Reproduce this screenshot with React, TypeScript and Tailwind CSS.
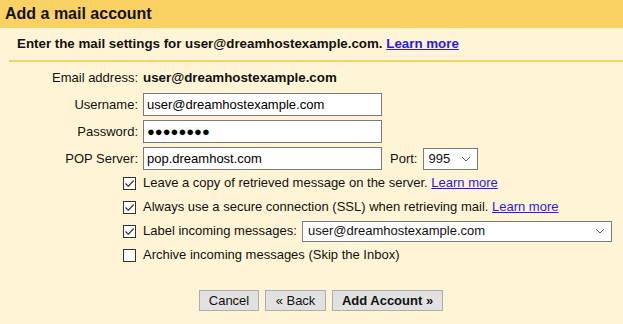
import React from 'react';

const Check = ({ checked }: { checked: boolean }) => (
  <span className="w-[13px] h-[13px] border border-[#333] bg-white flex items-center justify-center shrink-0">
    {checked && (
      <svg width="11" height="11" viewBox="0 0 11 11" fill="none">
        <path d="M1.5 5.5l2.8 2.8L9.8 2.5" stroke="#444" strokeWidth="1.3" />
      </svg>
    )}
  </span>
);

const Chevron = () => (
  <svg width="10" height="6" viewBox="0 0 10 6" fill="none">
    <path d="M1 1l4 4 4-4" stroke="#555" strokeWidth="1" />
  </svg>
);

const Link = ({ children }: { children: React.ReactNode }) => (
  <a href="#" className="text-[#2a17ee] underline">{children}</a>
);

const App = () => {
  const labelCls = 'text-right pr-[5px] text-[13px]';
  const inputCls = 'w-[239px] h-[23px] border border-[#7a7a7a] bg-white px-[3px] text-[13px] text-black outline-none';

  return (
    <div className="w-[623px] h-[324px] bg-[#fff5d6] text-[#111] font-['Liberation_Sans',Arial,sans-serif]">
      <div className="h-[28px] bg-[#fad163] flex items-center px-[5px]">
        <h1 className="text-[16px] font-bold">Add a mail account</h1>
      </div>

      <div className="h-[32px] flex items-center pl-[17px] text-[13.33px] font-bold">
        <span>
          Enter the mail settings for user@dreamhostexample.com. <Link>Learn more</Link>
        </span>
      </div>
      <div className="ml-[9px] h-[2px] bg-[#fad163]" />

      {/* account fields */}
      <div className="grid grid-cols-[143px_1fr] gap-y-[4px] items-center mt-[4px]">
        <div className={labelCls}>Email address:</div>
        <div className="h-[23px] flex items-center text-[13.33px] font-bold">user@dreamhostexample.com</div>

        <div className={labelCls}>Username:</div>
        <input className={inputCls} defaultValue="user@dreamhostexample.com" readOnly />

        <div className={labelCls}>Password:</div>
        <input className={inputCls} defaultValue="●●●●●●●●" readOnly />

        <div className={labelCls}>POP Server:</div>
        <div className="flex items-center">
          <input className={inputCls} defaultValue="pop.dreamhost.com" readOnly />
          <span className="ml-[8px] text-[13px]">Port:</span>
          <div className="ml-[6px] w-[55px] h-[22px] border border-[#7a7a7a] bg-white flex items-center justify-between pl-[4px] pr-[6px] text-[13px]">
            <span>995</span>
            <Chevron />
          </div>
        </div>
      </div>

      {/* options */}
      <div className="flex flex-col gap-[4px] mt-[3px] pl-[123px] text-[13px]">
        <label className="h-[20px] flex items-center gap-[7px]">
          <Check checked />
          <span>Leave a copy of retrieved message on the server. <Link>Learn more</Link></span>
        </label>
        <label className="h-[20px] flex items-center gap-[7px]">
          <Check checked />
          <span>Always use a secure connection (SSL) when retrieving mail. <Link>Learn more</Link></span>
        </label>
        <label className="h-[20px] flex items-center gap-[7px]">
          <Check checked />
          <span>Label incoming messages:</span>
          <div className="-ml-[2px] w-[310px] h-[21px] border border-[#7a7a7a] bg-white flex items-center justify-between pl-[5px] pr-[6px]">
            <span>user@dreamhostexample.com</span>
            <Chevron />
          </div>
        </label>
        <label className="h-[20px] flex items-center gap-[7px]">
          <Check checked={false} />
          <span>Archive incoming messages (Skip the Inbox)</span>
        </label>
      </div>

      <div className="flex gap-[6px] pl-[199px] mt-[25px] text-[13px]">
        <button className="w-[60px] h-[21px] bg-[#e1e1e1] border border-[#adadad] flex items-center justify-center">Cancel</button>
        <button className="w-[61px] h-[21px] bg-[#e1e1e1] border border-[#adadad] flex items-center justify-center">« Back</button>
        <button className="w-[111px] h-[21px] bg-[#e1e1e1] border border-[#adadad] flex items-center justify-center font-bold">Add Account »</button>
      </div>
    </div>
  );
};

export default App;
